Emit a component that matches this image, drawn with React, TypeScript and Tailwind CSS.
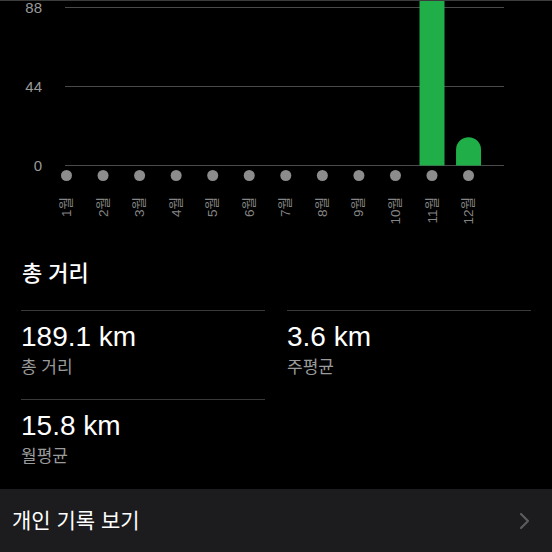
const months = ['1월', '2월', '3월', '4월', '5월', '6월', '7월', '8월', '9월', '10월', '11월', '12월']
// km per month, axis max is 88
const values = [0, 0, 0, 0, 0, 0, 0, 0, 0, 0, 173.3, 15.8]

const FONT = '"Liberation Sans", "Noto Sans CJK KR", sans-serif'

function Chart() {
  const base = 165.5
  const top = 7.5
  const scale = (base - top) / 88
  const x0 = 66.5
  const step = 36.55
  const barW = 25

  return (
    <svg width={552} height={240} className="block shrink-0" style={{ fontFamily: FONT }}>
      <line x1={0} x2={552} y1={0.5} y2={0.5} stroke="#3c3c3c" />
      {[top, (top + base) / 2, base].map((y) => (
        <line key={y} x1={65} x2={504} y1={y} y2={y} stroke="#4a4a4a" />
      ))}
      <text x={42} y={12.5} textAnchor="end" fontSize={15} fill="#9a9a9a">88</text>
      <text x={42} y={92} textAnchor="end" fontSize={15} fill="#9a9a9a">44</text>
      <text x={42} y={171} textAnchor="end" fontSize={15} fill="#9a9a9a">0</text>
      {values.map((v, i) => {
        if (!v) return null
        const cx = x0 + step * i
        const h = Math.min(v * scale, base - 1)
        const y = base - h
        const r = barW / 2
        if (h >= base - 2) {
          return <rect key={i} x={cx - r} y={1} width={barW} height={base - 1} fill="#1fae48" />
        }
        return (
          <path
            key={i}
            d={`M${cx - r} ${base} V${y + r} A${r} ${r} 0 0 1 ${cx + r} ${y + r} V${base} Z`}
            fill="#1fae48"
          />
        )
      })}
      {months.map((m, i) => {
        const cx = x0 + step * i
        return (
          <g key={m}>
            <circle cx={cx} cy={175.5} r={5.5} fill="#8c8c8c" />
            <text
              transform={`translate(${cx} 197) rotate(-90)`}
              textAnchor="end"
              dominantBaseline="central"
              fontSize={13.5}
              fill="#858585"
            >
              {m}
            </text>
          </g>
        )
      })}
    </svg>
  )
}

function Stat({ value, label }: { value: string; label: string }) {
  return (
    <div className="border-t border-[#3a3a3a] pt-[9px]">
      <p className="text-[28px] leading-[34px] text-white">{value}</p>
      <p className="text-[17px] leading-[22px] text-[#9b9b9b] mt-[3px]">{label}</p>
    </div>
  )
}

export default function App() {
  return (
    <div className="w-[552px] h-[552px] bg-black flex flex-col overflow-hidden" style={{ fontFamily: FONT }}>
      <Chart />

      <div className="px-[21px] flex-1">
        <h2 className="text-[22px] leading-[28px] font-medium text-white mt-[20px] ml-[1px]">총 거리</h2>
        <div className="grid grid-cols-2 gap-x-[22px] gap-y-[20px] mt-[22px]">
          <Stat value="189.1 km" label="총 거리" />
          <Stat value="3.6 km" label="주평균" />
          <Stat value="15.8 km" label="월평균" />
        </div>
      </div>

      <div className="h-[63px] shrink-0 bg-[#1c1c1e] flex items-center justify-between pl-[12px] pr-[22px]">
        <span className="text-[21px] text-white">개인 기록 보기</span>
        <svg width={12} height={18} viewBox="0 0 12 18" fill="none">
          <path d="M3 2l7 7-7 7" stroke="#5c5c5e" strokeWidth={2.2} strokeLinecap="round" strokeLinejoin="round" />
        </svg>
      </div>
    </div>
  )
}
